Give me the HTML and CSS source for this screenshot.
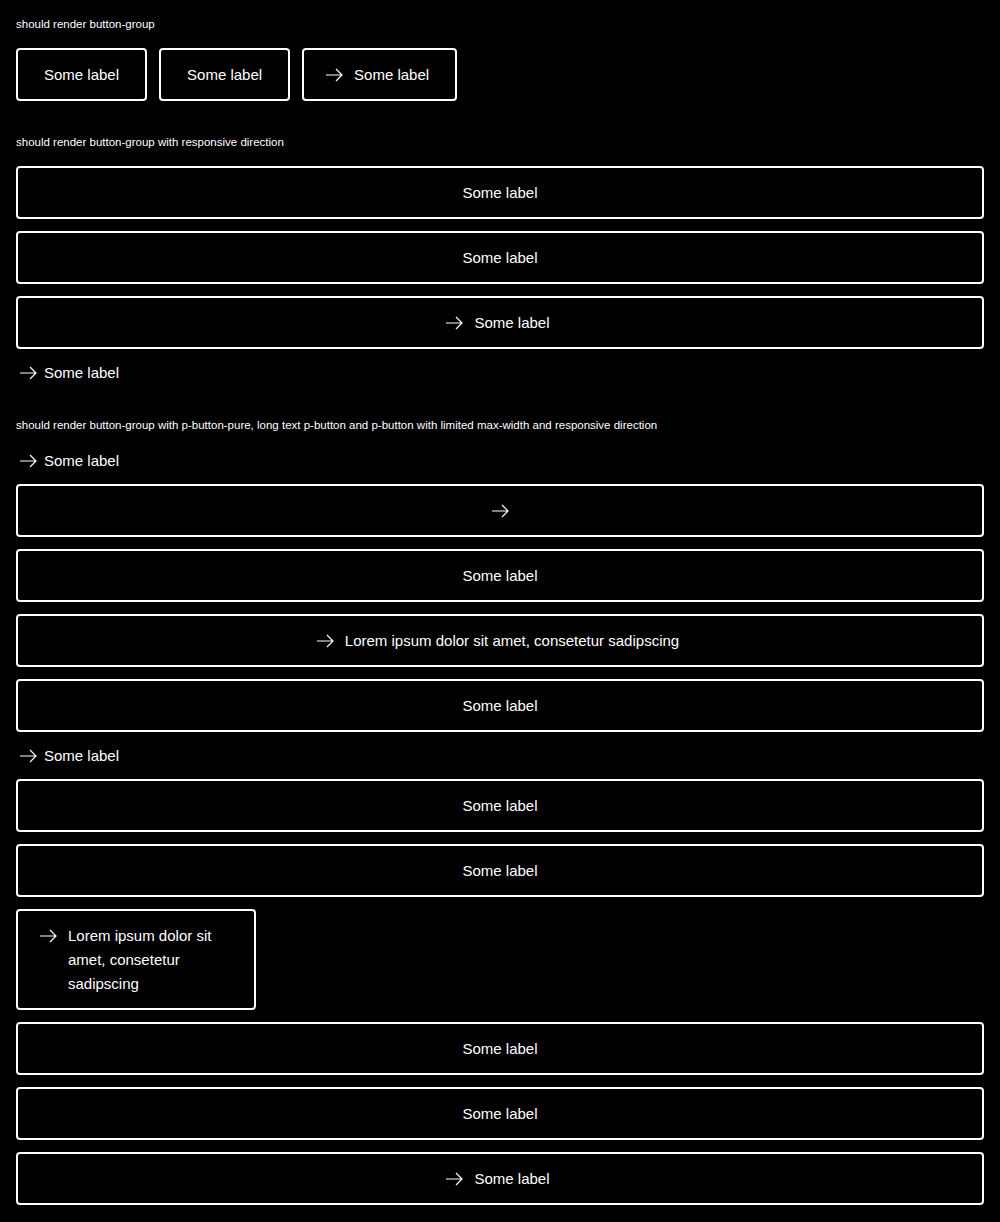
FILE: index.html
```html
<!DOCTYPE html>
<html lang="en">
<head>
<meta charset="utf-8">
<title>Button group</title>
<link rel="stylesheet" href="styles.css">
</head>
<body>
<section class="section">
  <p class="title">should render button-group</p>
  <div class="group row">
    <button class="btn"><span class="label">Some label</span></button>
    <button class="btn"><span class="label">Some label</span></button>
    <button class="btn has-icon"><svg class="icon" viewBox="0 0 24 24"><path d="M4 12H20M14 6L20 12L14 18"/></svg><span class="label">Some label</span></button>
  </div>
</section>

<section class="section">
  <p class="title">should render button-group with responsive direction</p>
  <div class="group col">
    <button class="btn"><span class="label">Some label</span></button>
    <button class="btn"><span class="label">Some label</span></button>
    <button class="btn has-icon"><svg class="icon" viewBox="0 0 24 24"><path d="M4 12H20M14 6L20 12L14 18"/></svg><span class="label">Some label</span></button>
    <button class="pure"><svg class="icon" viewBox="0 0 24 24"><path d="M4 12H20M14 6L20 12L14 18"/></svg><span class="label">Some label</span></button>
  </div>
</section>

<section class="section">
  <p class="title">should render button-group with p-button-pure, long text p-button and p-button with limited max-width and responsive direction</p>
  <div class="group col">
    <button class="pure"><svg class="icon" viewBox="0 0 24 24"><path d="M4 12H20M14 6L20 12L14 18"/></svg><span class="label">Some label</span></button>
    <button class="btn icon-only"><svg class="icon" viewBox="0 0 24 24"><path d="M4 12H20M14 6L20 12L14 18"/></svg></button>
    <button class="btn"><span class="label">Some label</span></button>
    <button class="btn has-icon"><svg class="icon" viewBox="0 0 24 24"><path d="M4 12H20M14 6L20 12L14 18"/></svg><span class="label">Lorem ipsum dolor sit amet, consetetur sadipscing</span></button>
    <button class="btn"><span class="label">Some label</span></button>
    <button class="pure"><svg class="icon" viewBox="0 0 24 24"><path d="M4 12H20M14 6L20 12L14 18"/></svg><span class="label">Some label</span></button>
    <button class="btn"><span class="label">Some label</span></button>
    <button class="btn"><span class="label">Some label</span></button>
    <button class="btn has-icon limited"><svg class="icon" viewBox="0 0 24 24"><path d="M4 12H20M14 6L20 12L14 18"/></svg><span class="label">Lorem ipsum dolor sit amet, consetetur sadipscing</span></button>
    <button class="btn"><span class="label">Some label</span></button>
    <button class="btn"><span class="label">Some label</span></button>
    <button class="btn has-icon"><svg class="icon" viewBox="0 0 24 24"><path d="M4 12H20M14 6L20 12L14 18"/></svg><span class="label">Some label</span></button>
  </div>
</section>
</body>
</html>
```

FILE: styles.css
```css
html, body {
  background: #000;
}
body {
  margin: 0;
  padding: 16px;
  color: #fff;
  font-family: "Liberation Sans", Arial, sans-serif;
}
.section + .section {
  margin-top: 33px;
}
.title {
  margin: 0 0 16px;
  font-size: 11.5px;
  line-height: 16px;
  color: #fff;
}
.group {
  display: flex;
  gap: 12px;
}
.group.row {
  flex-direction: row;
  align-items: flex-start;
}
.group.col {
  flex-direction: column;
}
.btn {
  display: flex;
  justify-content: center;
  align-items: flex-start;
  box-sizing: border-box;
  height: 53px;
  margin: 0;
  padding: 13px 26px;
  border: 2px solid #fff;
  border-radius: 4px;
  background: transparent;
  color: #fff;
  font-family: inherit;
  font-size: 15px;
  line-height: 23px;
  text-align: left;
  cursor: pointer;
}
.btn .icon {
  margin-top: -0.5px;
}
.btn.has-icon {
  padding-left: 18px;
}
.btn.icon-only {
  padding: 13px;
}
.btn.limited {
  height: 101px;
  max-width: 240px;
  justify-content: flex-start;
  line-height: 24px;
}
.btn.limited .icon {
  margin-top: 0;
}
.icon {
  flex: 0 0 auto;
  width: 24px;
  height: 24px;
  fill: none;
  stroke: #fff;
  stroke-width: 1.2;
}
.btn.has-icon .icon {
  margin-right: 8px;
}
.pure {
  align-self: flex-start;
  display: flex;
  align-items: flex-start;
  box-sizing: border-box;
  height: 23px;
  margin: 0;
  padding: 0;
  border: 0;
  background: transparent;
  color: #fff;
  font-family: inherit;
  font-size: 15px;
  line-height: 24px;
  cursor: pointer;
}
.pure .icon {
  margin-right: 4px;
}
```
